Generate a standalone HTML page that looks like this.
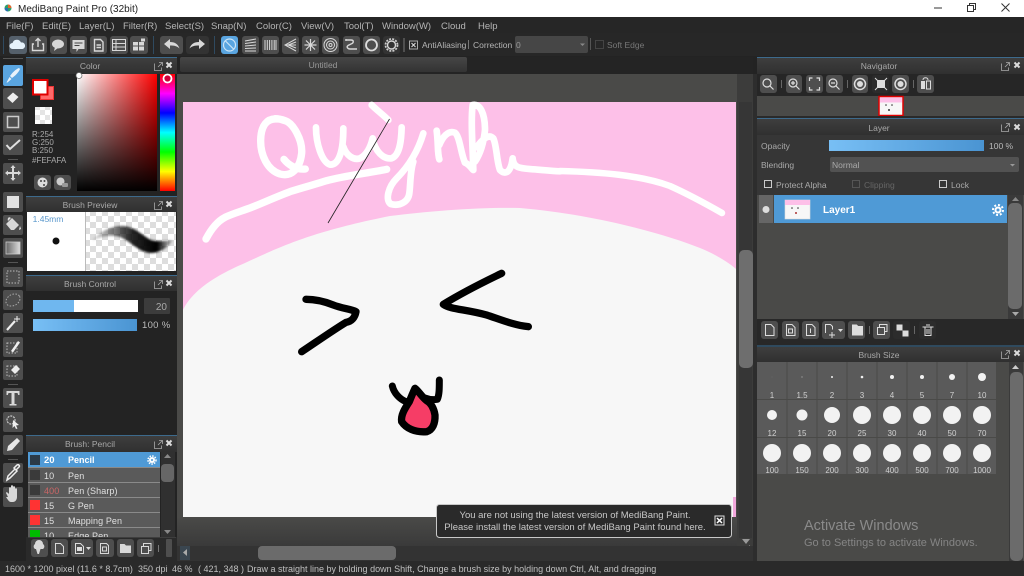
<!DOCTYPE html>
<html><head><meta charset="utf-8"><style>
html,body{margin:0;padding:0;background:#232323;width:1024px;height:576px;overflow:hidden}
svg{display:block;position:absolute;left:0;top:0}
text{font-family:"Liberation Sans",sans-serif;font-size:8.5px;fill:#b5b5b5;letter-spacing:0}
.m{text-anchor:middle}
.h{text-anchor:middle;fill:#a8a8a8}
.b{fill:#4e4e4e}
.i{fill:#d8d8d8}
.s{fill:none;stroke:#d8d8d8;stroke-width:1.4}
.d{text-anchor:middle;font-size:8px;fill:#d0d0d0;letter-spacing:0}
.l{font-size:9px;fill:#e0e0e0;letter-spacing:.1px}
.c{fill:none;stroke:#fff;stroke-width:5.5;stroke-linecap:round;stroke-linejoin:round}
.k{fill:none;stroke:#000;stroke-width:5;stroke-linecap:round;stroke-linejoin:round}
.sep{fill:#777}
.st{font-size:9px;fill:#c0c0c0}
.n{text-anchor:middle;font-size:9.5px;fill:#c8c8c8}
.mn{font-size:9.5px}
</style></head><body>
<svg width="1024" height="576" viewBox="0 0 1024 576" xmlns="http://www.w3.org/2000/svg">
<defs>
<linearGradient id="hd" x1="0" y1="0" x2="0" y2="1"><stop offset="0" stop-color="#3e3e3e"/><stop offset="1" stop-color="#303030"/></linearGradient>
<linearGradient id="blue" x1="0" y1="0" x2="1" y2="0"><stop offset="0" stop-color="#78bff5"/><stop offset="1" stop-color="#4a94d2"/></linearGradient>
<linearGradient id="sv1" x1="0" y1="0" x2="1" y2="0"><stop offset="0" stop-color="#fff"/><stop offset="1" stop-color="#f00"/></linearGradient>
<linearGradient id="sv2" x1="0" y1="0" x2="0" y2="1"><stop offset="0" stop-color="#000" stop-opacity="0"/><stop offset="1" stop-color="#000"/></linearGradient>
<linearGradient id="hue" x1="0" y1="0" x2="0" y2="1"><stop offset="0" stop-color="#f00"/><stop offset=".167" stop-color="#f0f"/><stop offset=".333" stop-color="#00f"/><stop offset=".5" stop-color="#0ff"/><stop offset=".667" stop-color="#0f0"/><stop offset=".833" stop-color="#ff0"/><stop offset="1" stop-color="#f00"/></linearGradient>
<linearGradient id="gr" x1="0" y1="0" x2="1" y2="0"><stop offset="0" stop-color="#666"/><stop offset="1" stop-color="#ddd"/></linearGradient>
<linearGradient id="st" x1="0" y1="0" x2="1" y2="0"><stop offset="0" stop-color="#000" stop-opacity=".1"/><stop offset=".5" stop-color="#000" stop-opacity=".85"/><stop offset=".8" stop-color="#000"/><stop offset="1" stop-color="#000" stop-opacity=".15"/></linearGradient>
<linearGradient id="tab" x1="0" y1="0" x2="0" y2="1"><stop offset="0" stop-color="#464646"/><stop offset="1" stop-color="#333"/></linearGradient>
<linearGradient id="bot" x1="0" y1="0" x2="0" y2="1"><stop offset="0" stop-color="#4a4a48"/><stop offset="1" stop-color="#3a3a3a"/></linearGradient>
<pattern id="chk" width="10" height="10" patternUnits="userSpaceOnUse"><rect width="10" height="10" fill="#fff"/><rect width="5" height="5" fill="#e4e4e4"/><rect x="5" y="5" width="5" height="5" fill="#e4e4e4"/></pattern>
<pattern id="chk2" width="12" height="12" patternUnits="userSpaceOnUse"><rect width="12" height="12" fill="#fff"/><rect width="6" height="6" fill="#ddd"/><rect x="6" y="6" width="6" height="6" fill="#ddd"/></pattern>
<filter id="bl" x="-10%" y="-30%" width="120%" height="160%"><feGaussianBlur stdDeviation="1"/></filter>
</defs>

<!-- base -->
<rect width="1024" height="576" fill="#232323"/>

<!-- title bar -->
<rect width="1024" height="17" fill="#fff"/>
<circle cx="8" cy="8" r="3.5" fill="#2f9e6a"/><path d="M8 4.5a3.5 3.5 0 0 1 3.5 3.5H8z" fill="#e8632c"/><path d="M4.5 8a3.5 3.5 0 0 0 3.5 3.5V8z" fill="#2a6fb0"/>
<text x="18" y="12" style="font-size:10px;fill:#222">MediBang Paint Pro (32bit)</text>
<path d="M934 8h8" stroke="#333" fill="none"/>
<path d="M967.500 5.500h6v6h-6zM969.500 5.500v-2h6v6h-2" stroke="#333" fill="none"/>
<path d="M1001.500 3.500l8 8M1009.500 3.500l-8 8" stroke="#333" fill="none"/>

<!-- menu -->
<rect y="17" width="1024" height="16" fill="#262626"/>
<text x="6" y="29" class="mn">File(F)</text>
<text x="42" y="29" class="mn">Edit(E)</text>
<text x="79" y="29" class="mn">Layer(L)</text>
<text x="123" y="29" class="mn">Filter(R)</text>
<text x="165" y="29" class="mn">Select(S)</text>
<text x="211" y="29" class="mn">Snap(N)</text>
<text x="256" y="29" class="mn">Color(C)</text>
<text x="301" y="29" class="mn">View(V)</text>
<text x="344" y="29" class="mn">Tool(T)</text>
<text x="382" y="29" class="mn">Window(W)</text>
<text x="441" y="29" class="mn">Cloud</text>
<text x="478" y="29" class="mn">Help</text>

<!-- toolbar -->
<rect y="33" width="1024" height="23" fill="#272727"/>
<rect x="3" y="36" width="1" height="18" fill="#2f4a60"/>
<rect x="153" y="36" width="1" height="18" fill="#2f4a60"/>
<rect x="214" y="36" width="1" height="18" fill="#2f4a60"/>
<g class="b">
<rect x="9" y="36" width="18" height="18" rx="3" fill="#55606b"/>
<rect x="29" y="36" width="18" height="18" rx="3"/>
<rect x="50" y="36" width="17" height="18" rx="3"/>
<rect x="70" y="36" width="17" height="18" rx="3"/>
<rect x="90" y="36" width="17" height="18" rx="3"/>
<rect x="110" y="36" width="18" height="18" rx="3"/>
<rect x="130" y="36" width="18" height="18" rx="3"/>
<rect x="160" y="36" width="23" height="18" rx="3"/>
<rect x="186" y="36" width="23" height="18" rx="3" fill="#333"/>
<rect x="242" y="36" width="17" height="18" rx="3"/>
<rect x="262" y="36" width="17" height="18" rx="3"/>
<rect x="282" y="36" width="17" height="18" rx="3"/>
<rect x="302" y="36" width="17" height="18" rx="3"/>
<rect x="322" y="36" width="17" height="18" rx="3"/>
<rect x="343" y="36" width="17" height="18" rx="3"/>
<rect x="363" y="36" width="17" height="18" rx="3"/>
<rect x="383" y="36" width="17" height="18" rx="3" fill="#333"/>
</g>
<rect x="221" y="36" width="17" height="18" rx="3" fill="#5aa5e0"/>
<circle cx="229.500" cy="45" r="6" fill="none" stroke="#cde4f6" stroke-width="1.200"/><path d="M225.500 41l8 8" stroke="#cde4f6" stroke-width="1.200"/>
<path d="M12.500 49a3 3 0 0 1 0-6 4.500 4.500 0 0 1 8.500-.5 3.300 3.300 0 0 1 1.500 6.500z" fill="#e6f2fb"/>
<path class="s" d="M34 44h-1.500v6.500h11V44H42M38 47v-8M35.500 41l2.500-2.500 2.500 2.500"/>
<ellipse cx="58" cy="44" rx="6" ry="4.500" class="i"/><path class="i" d="M55 47l-1 4 4-3z"/>
<path class="i" d="M72.500 40h12v9h-6l-2 3v-3h-4z"/><path d="M74.500 43h8M74.500 45.500h5" stroke="#444"/>
<path class="s" d="M94.500 39.500h6l2.500 2.500v9h-8.500zM96.500 45h4.500M96.500 47.500h4.500"/>
<path class="s" style="stroke-width:1" d="M112.500 39.500h13v11h-13zM112.500 43.500h13M112.500 47h13M116 39.500v11"/>
<path class="i" d="M133 42h5v3.500h-5zM139 42h5v3.500h-5zM133 46.500h5v4h-5zM139 46.500h5v4h-5zM141 38.500h4v3h-4z"/>
<path class="i" d="M164 44l6-5v3c5 0 8 2 9.500 6.500-2.500-2.500-5-3-9.500-3v3.500z"/>
<path class="i" d="M205 44l-6-5v3c-5 0-8 2-9.500 6.500 2.500-2.500 5-3 9.500-3v3.500z"/>
<path class="s" style="stroke-width:1" d="M245 41l11-2M245 43.500l11-1.500M245 46l11-1M245 48.500l11-.5M245 51l11 0"/>
<path class="s" style="stroke-width:1" d="M265 40v10M267.300 40v10M269.600 40v10M271.900 40v10M274.200 40v10M276 40v10"/>
<path class="s" style="stroke-width:1" d="M296 39l-11 6 11 6M296 42l-8 3 8 3M296 45h-11"/>
<path class="s" style="stroke-width:1.200" d="M310.500 39v12M304.500 45h12M306 40.500l9 9M315 40.500l-9 9"/>
<circle cx="330.500" cy="45" r="6.500" class="s" style="stroke-width:1"/><circle cx="330.500" cy="45" r="4" class="s" style="stroke-width:1"/><circle cx="330.500" cy="45" r="1.500" class="s" style="stroke-width:1"/>
<path class="s" d="M346.500 40h4.500c3 0 3 3 0 4l-3 1.500c-2 1.500 0 3.500 2 3.500h5"/><circle cx="346" cy="40" r="1" class="i"/><circle cx="356" cy="49" r="1" class="i"/>
<circle cx="371.500" cy="45" r="5.500" fill="none" stroke="#ddd" stroke-width="1.800"/>
<circle cx="391.500" cy="45" r="4" class="s"/><circle cx="391.500" cy="45" r="6" fill="none" stroke="#ccc" stroke-width="1.800" stroke-dasharray="2 1.200"/>
<rect x="403.500" y="38" width="1" height="14" class="sep"/>
<rect x="409.500" y="41" width="8" height="8" fill="none" stroke="#aaa"/><path d="M411.500 43l4 4M415.500 43l-4 4" stroke="#ddd"/>
<text x="422" y="48">AntiAliasing</text>
<rect x="468" y="40" width="1" height="9" class="sep"/>
<text x="473" y="48">Correction</text>
<rect x="515" y="36" width="73" height="17" rx="2" fill="#464646"/>
<text x="516" y="48" style="fill:#999">0</text>
<path d="M580 43.500h5l-2.500 2.500z" fill="#888"/>
<rect x="590" y="38" width="1" height="12" fill="#555"/>
<rect x="595.500" y="40.500" width="8" height="8" fill="none" stroke="#444"/>
<text x="607" y="48" style="fill:#777">Soft Edge</text>

<!-- tab strip -->
<rect x="180" y="57" width="577" height="17" fill="#242424"/>
<rect x="180" y="57" width="287" height="15" rx="2" fill="url(#tab)"/>
<text x="323" y="68" class="m" style="fill:#999">Untitled</text>

<!-- canvas area -->
<rect x="177" y="74" width="576" height="472" fill="#4a4a48"/>
<rect x="177" y="517" width="560" height="29" fill="url(#bot)"/>
<rect x="737" y="74" width="16" height="472" fill="#3c3c3b"/>

<!-- canvas -->
<rect x="183" y="102" width="553" height="415" fill="#fdc0e8"/>
<path d="M183 310C190 296 205 280 245 263 280 247 310 232 390 216 430 211 480 207 520 208 590 214 660 232 700 248 715 254 728 262 736 269V517H183z" fill="#f7f7f7"/>
<rect x="733" y="497" width="3" height="20" fill="#f2a8dc"/>

<g transform="translate(180,90) scale(.33333)">
<g class="c">
<path style="stroke-width:22" d="M290 87C262 85 243 105 242 150 241 195 262 240 300 252 335 262 360 235 365 190 368 150 340 100 315 92 305 88 295 86 285 86"/>
<path style="stroke-width:22" d="M312 208C325 225 350 240 376 237"/>
<path style="stroke-width:20" d="M408 112C408 160 425 215 450 224 478 225 490 180 490 115"/>
<path style="stroke-width:20" d="M490 170C498 195 520 212 540 205 560 195 572 170 578 145 585 185 610 208 635 205 660 195 664 150 665 112"/>
<path style="stroke-width:20" d="M730 130C715 180 690 225 650 265 625 290 615 330 632 342 660 350 685 335 688 310 692 280 690 245 700 215"/>
<path style="stroke-width:20" d="M770 122C775 160 772 190 778 208M778 165C788 140 805 120 825 128 840 140 842 190 855 218"/>
<path style="stroke-width:20" d="M855 218C870 225 878 240 880 240 878 170 872 90 878 45 900 40 915 70 915 120 910 170 895 200 885 215M890 172C905 150 925 130 940 145 950 165 950 215 960 240 975 255 992 250 998 205 1000 235 1020 235 1060 238 1090 240 1110 243 1140 244"/>
<path style="stroke-width:20" d="M575 45C590 60 610 75 625 90"/>
<path style="stroke-width:22" d="M78 447C92 420 110 395 135 382 160 370 190 362 215 352 250 338 290 320 330 305 370 292 410 282 440 272 490 258 560 250 620 238"/>
</g>
</g>
<path class="c" style="stroke-width:6.500" d="M560 171C600 172 640 175 670 186 690 195 708 205 722 213"/>
<path d="M389.500 119L328 223" stroke="#222" stroke-width=".8" fill="none"/>

<g transform="translate(280,260) scale(.33333)">
<path class="k" style="stroke-width:22" d="M78 118C110 118 135 125 160 135 185 145 215 148 228 155 225 172 215 185 198 187 160 210 110 245 65 275"/>
<path class="k" style="stroke-width:22" d="M665 40C620 62 560 90 490 133 510 148 560 148 620 165 660 178 700 195 745 200"/>
<path d="M388 425C375 445 362 465 365 485 378 505 405 518 440 515 458 510 466 490 465 465 462 445 452 428 440 422 425 410 415 392 405 385 398 400 392 415 388 425z" fill="#f63d66" stroke="#000" stroke-width="22" stroke-linejoin="round"/>
<path class="k" style="stroke-width:21" d="M337 378C342 400 360 418 378 425M478 360C478 385 478 405 472 418 458 420 445 418 435 414"/>
</g>

<!-- canvas scrollbars -->
<rect x="739" y="102" width="13" height="436" fill="#363636"/>
<rect x="739" y="250" width="14" height="118" rx="5" fill="#6e6e6e"/>
<path d="M742 539h8l-4 5z" fill="#999"/>
<path d="M749 545v7l4-3.500z" fill="#999"/>
<rect x="177" y="546" width="576" height="15" fill="#333"/>
<rect x="180" y="546" width="10" height="14" fill="#3a4650"/>
<path d="M187 549v7l-4-3.500z" fill="#aaa"/>
<rect x="258" y="546" width="138" height="14" rx="4" fill="#6b6b6b"/>

<!-- status -->
<rect y="561" width="1024" height="15" fill="#2a2a2a"/>
<text x="5" y="572" class="st">1600 * 1200 pixel</text>
<text x="77" y="572" class="st">(11.6 * 8.7cm)</text>
<text x="138" y="572" class="st">350 dpi</text>
<text x="172" y="572" class="st">46 %</text>
<text x="198" y="572" class="st">( 421, 348 )</text>
<text x="247" y="572" class="st">Draw a straight line by holding down Shift, Change a brush size by holding down Ctrl, Alt, and dragging</text>

<!-- notification -->
<rect x="436.500" y="504.500" width="295" height="33" rx="3" fill="#2a2a2a" stroke="#c8c8c8"/>
<text x="575" y="518" class="n">You are not using the latest version of MediBang Paint.</text>
<text x="575" y="530" class="n">Please install the latest version of MediBang Paint found here.</text>
<rect x="715" y="516" width="9" height="9" fill="none" stroke="#e0e0e0"/><path d="M717 518l5 5M722 518l-5 5" stroke="#fff" stroke-width="1.500"/>

<!-- left tools -->
<rect x="0" y="56" width="26" height="505" fill="#232323"/>
<rect x="3" y="58" width="20" height="1" fill="#555"/>
<g fill="#4e4e4e">
<rect x="3" y="88" width="20" height="21" rx="2"/>
<rect x="3" y="112" width="20" height="20" rx="2"/>
<rect x="3" y="135" width="20" height="20" rx="2"/>
<rect x="3" y="163" width="20" height="21" rx="2"/>
<rect x="3" y="192" width="20" height="20" rx="2"/>
<rect x="3" y="215" width="20" height="20" rx="2"/>
<rect x="3" y="238" width="20" height="20" rx="2"/>
<rect x="3" y="267" width="20" height="20" rx="2"/>
<rect x="3" y="290" width="20" height="20" rx="2"/>
<rect x="3" y="313" width="20" height="20" rx="2"/>
<rect x="3" y="337" width="20" height="20" rx="2"/>
<rect x="3" y="360" width="20" height="20" rx="2"/>
<rect x="3" y="388" width="20" height="20" rx="2"/>
<rect x="3" y="412" width="20" height="20" rx="2"/>
<rect x="3" y="435" width="20" height="20" rx="2"/>
<rect x="3" y="463" width="20" height="20" rx="2"/>
<rect x="3" y="487" width="20" height="20" rx="2"/>
</g>
<rect x="3" y="65" width="20" height="21" rx="2" fill="#5aa5e0"/>
<path d="M19 68c-3 1-7 5-9 8l2 2c3-2 7-6 8-9zM9.500 77l2 2-4 3.500h-1z" fill="#e8f2fa"/>
<path d="M7 98l6-5.500 5.500 4.500-6 6z" fill="#eee"/>
<rect x="7.500" y="116.500" width="11" height="11" fill="none" stroke="#ccc" stroke-width="1.500"/>
<path d="M6.500 145l3.500 4 10-9" fill="none" stroke="#e0e0e0" stroke-width="2"/>
<path class="i" d="M13 165l2.500 3h-1.500v4h4v-1.500l3 2.500-3 2.500V174h-4v4h1.500L13 181l-2.500-3H12v-4H8v1.500L5 173l3-2.500V172h4v-4h-1.500z"/>
<rect x="7" y="196" width="12" height="12" fill="#e2e2e2"/>
<path class="i" d="M6 224l6-6 7 7-5 5h-3zM11 218c-2-2-4 0-3 3"/><path d="M20 226l1 3-2 1z" fill="#eee"/>
<rect x="6" y="242" width="14" height="12" fill="url(#gr)" stroke="#ccc" stroke-width=".8"/>
<rect x="7" y="271" width="12" height="12" fill="none" stroke="#bbb" stroke-dasharray="1.500 1.500"/>
<ellipse cx="13" cy="300" rx="7.500" ry="5.500" fill="none" stroke="#aaa" stroke-dasharray="1.500 1.500" transform="rotate(-30 13 300)"/>
<path d="M7 330l8-9" stroke="#eee" stroke-width="2.200"/><path d="M17 316v6M14 319h6" stroke="#eee"/>
<rect x="7" y="343" width="10" height="10" fill="none" stroke="#bbb" stroke-dasharray="1.500 1.500"/><path d="M11 351l7-10 2 1.500-7 10z" fill="#eee"/>
<rect x="7" y="366" width="10" height="10" fill="none" stroke="#bbb" stroke-dasharray="1.500 1.500"/><path d="M11 370l5-5 4 4-5 5z" fill="#eee"/>
<path class="i" d="M6.500 391h13v4h-1.300l-.7-2h-3v11h2v1.500h-7V404h2v-11h-3l-.7 2H6.500z"/>
<circle cx="11" cy="420" r="4" fill="none" stroke="#ccc" stroke-width="1.200" stroke-dasharray="2 1"/><path d="M13 420l6 5-3 .5 1.500 3-1.500.5-1.500-3-2 2z" fill="#eee"/>
<path d="M7 451l1-5 9-8 3 3-8 9z" fill="#e6e6e6"/>
<path d="M7 480l1-4 7-7 2 2-7 7zM14 468l3-3c2-1 3 1 2 2l-3 3z" fill="none" stroke="#eee" stroke-width="1.500"/>
<path class="i" d="M8 497l-2-4c0-1 1-1 2 0l1 1v-6c0-1 2-1 2 0v4-6c0-1 2-1 2 0v6-5c0-1 2-1 2 0v6-4c0-1 2-1 2 0v8c0 3-2 5-4 5h-2c-2 0-3-2-5-5z"/>
<rect x="8" y="159" width="10" height="1" fill="#555"/><rect x="8" y="262" width="10" height="1" fill="#555"/><rect x="8" y="384" width="10" height="1" fill="#555"/><rect x="8" y="459" width="10" height="1" fill="#555"/>

<!-- COLOR panel -->
<rect x="26" y="57" width="151" height="1" fill="#3d6a8c"/>
<rect x="26" y="58" width="151" height="16" fill="url(#hd)"/>
<text x="90" y="69" class="h">Color</text>
<path d="M154.500 63.500v7h7v-3M158 67l4-4M159 62.500h3.500V66" fill="none" stroke="#aaa" stroke-width=".8"/>
<path d="M166.500 62.500l5 5M171.500 62.500l-5 5" stroke="#ddd" stroke-width="2"/>
<rect x="26" y="74" width="151" height="121" fill="#232323"/>
<rect x="40.500" y="86.500" width="13" height="13" fill="#ff6a6a" stroke="#e33"/>
<rect x="33" y="80" width="14.500" height="14.500" fill="#fff" stroke="#e00000" stroke-width="2"/>
<rect x="35" y="107" width="17" height="17" fill="url(#chk)"/>
<text x="32" y="137" style="font-size:8px;fill:#aaa">R:254</text>
<text x="32" y="145" style="font-size:8px;fill:#aaa">G:250</text>
<text x="32" y="153" style="font-size:8px;fill:#aaa">B:250</text>
<text x="32" y="163" style="font-size:8px;fill:#aaa">#FEFAFA</text>
<rect x="34" y="175" width="17" height="15" rx="3" fill="#4e4e4e"/><rect x="54" y="175" width="17" height="15" rx="3" fill="#4e4e4e"/>
<circle cx="42.500" cy="182.500" r="5" fill="#ddd"/><circle cx="41" cy="181" r="1" fill="#444"/><circle cx="44.500" cy="181" r="1" fill="#444"/><circle cx="44" cy="185" r="1" fill="#444"/>
<circle cx="60.500" cy="181.500" r="4" fill="#ccc"/><rect x="62" y="183" width="6" height="4" rx="1" fill="#999"/>
<rect x="77" y="74" width="80" height="117" fill="url(#sv1)"/>
<rect x="77" y="74" width="80" height="117" fill="url(#sv2)"/>
<circle cx="79" cy="75.500" r="3" fill="#fff" stroke="#666" stroke-width=".7"/>
<rect x="160" y="74" width="15" height="117" fill="url(#hue)"/>
<circle cx="167.500" cy="78.500" r="4" fill="#d0003a" stroke="#fff" stroke-width="1.800"/>

<!-- BRUSH PREVIEW -->
<rect x="26" y="196" width="151" height="1" fill="#3d6a8c"/>
<rect x="26" y="197" width="151" height="15" fill="url(#hd)"/>
<text x="90" y="208" class="h">Brush Preview</text>
<path d="M154.500 202.500v7h7v-3M158 206l4-4M159 201.500h3.500V205" fill="none" stroke="#aaa" stroke-width=".8"/>
<path d="M166.500 201.500l5 5M171.500 201.500l-5 5" stroke="#ddd" stroke-width="2"/>
<rect x="27" y="212" width="58" height="59" fill="#fff"/>
<rect x="85" y="212" width="1" height="59" fill="#bbb"/>
<rect x="86" y="212" width="90" height="59" fill="url(#chk2)"/>
<text x="48" y="222" style="text-anchor:middle;fill:#5a98cc;font-size:8.500px">1.45mm</text>
<circle cx="56" cy="241" r="3.500" fill="#111"/>
<path d="M92 241C100 231 112 226 122 226 134 226 143 236 151 240 158 242 164 241 173 240 167 248 160 253 151 253 140 253 130 241 120 237 110 234 100 237 92 241z" fill="url(#st)" filter="url(#bl)"/>

<!-- BRUSH CONTROL -->
<rect x="26" y="275" width="151" height="1" fill="#3d6a8c"/>
<rect x="26" y="276" width="151" height="15" fill="url(#hd)"/>
<text x="90" y="287" class="h">Brush Control</text>
<path d="M154.500 281.500v7h7v-3M158 285l4-4M159 280.500h3.500V284" fill="none" stroke="#aaa" stroke-width=".8"/>
<path d="M166.500 280.500l5 5M171.500 280.500l-5 5" stroke="#ddd" stroke-width="2"/>
<rect x="33" y="300" width="105" height="12" fill="#fff"/>
<rect x="33" y="300" width="41" height="12" fill="#6fb7ef"/>
<rect x="144" y="298" width="26" height="16" rx="1" fill="#3c3c3c"/>
<text x="167" y="310" style="text-anchor:end;fill:#aaa;font-size:10px">20</text>
<rect x="33" y="319" width="104" height="12" fill="url(#blue)"/>
<text x="142" y="328" style="fill:#bbb;font-size:9.500px;letter-spacing:.3px">100 %</text>

<!-- BRUSH LIST -->
<rect x="26" y="435" width="151" height="1" fill="#3d6a8c"/>
<rect x="26" y="436" width="151" height="16" fill="url(#hd)"/>
<text x="90" y="447" class="h">Brush: Pencil</text>
<path d="M154.500 441.500v7h7v-3M158 445l4-4M159 440.500h3.500V444" fill="none" stroke="#aaa" stroke-width=".8"/>
<path d="M166.500 440.500l5 5M171.500 440.500l-5 5" stroke="#ddd" stroke-width="2"/>
<rect x="28" y="452" width="132" height="85" fill="#5a5a5a"/>
<rect x="28" y="452" width="132" height="16" fill="#4f9ad6"/>
<rect x="28" y="482" width="132" height="1" fill="#8a8a8a"/><rect x="28" y="497" width="132" height="1" fill="#8a8a8a"/><rect x="28" y="512" width="132" height="1" fill="#8a8a8a"/><rect x="28" y="527" width="132" height="1" fill="#8a8a8a"/><rect x="28" y="467" width="132" height="1" fill="#8a8a8a"/>
<rect x="30" y="455" width="10" height="10" fill="#2b3a48"/>
<rect x="30" y="470" width="10" height="10" fill="#3a3a3a"/>
<rect x="30" y="485" width="10" height="10" fill="#3a3a3a"/>
<rect x="30" y="500" width="10" height="10" fill="#f33"/>
<rect x="30" y="515" width="10" height="10" fill="#f33"/>
<rect x="30" y="530" width="10" height="7" fill="#0b0"/>
<text x="44" y="463" style="font-size:9.500px;font-weight:bold;fill:#fff">20</text>
<text x="68" y="463" style="font-size:9px;font-weight:bold;fill:#fff">Pencil</text>
<text x="44" y="479" class="l">10</text><text x="68" y="479" class="l">Pen</text>
<text x="44" y="494" class="l" style="fill:#c66">400</text><text x="68" y="494" class="l">Pen (Sharp)</text>
<text x="44" y="509" class="l">15</text><text x="68" y="509" class="l">G Pen</text>
<text x="44" y="524" class="l">15</text><text x="68" y="524" class="l">Mapping Pen</text>
<clipPath id="cl"><rect x="28" y="528" width="132" height="9"/></clipPath>
<g clip-path="url(#cl)"><text x="44" y="539" class="l">10</text><text x="68" y="539" class="l">Edge Pen</text></g>
<circle cx="152" cy="460" r="3" fill="#fff"/><circle cx="152" cy="460" r="4" fill="none" stroke="#fff" stroke-width="1.500" stroke-dasharray="1.500 1.200"/><circle cx="152" cy="460" r="1" fill="#4f9ad6"/>
<rect x="161" y="452" width="14" height="85" fill="#303030"/>
<path d="M164 458h7l-3.500-4z" fill="#888"/><path d="M164 530h7l-3.500 4z" fill="#888"/>
<rect x="161" y="464" width="13" height="18" rx="4" fill="#666"/>
<rect x="26" y="537" width="151" height="24" fill="#2a2a2a"/>
<rect x="28" y="537" width="148" height="1" fill="#3e3e3e"/>
<g fill="#4e4e4e"><rect x="31" y="539" width="17" height="18" rx="3"/><rect x="51" y="539" width="17" height="18" rx="3"/><rect x="71" y="539" width="22" height="18" rx="3"/><rect x="96" y="539" width="18" height="18" rx="3"/><rect x="117" y="539" width="17" height="18" rx="3"/><rect x="137" y="539" width="17" height="18" rx="3"/><rect x="166" y="539" width="6" height="18" rx="1"/></g>
<rect x="158" y="545" width="1" height="7" fill="#777"/>
<path class="i" d="M35 549a3 3 0 0 1 0-5 4 4 0 0 1 8 0 3 3 0 0 1 0 5h-2.500l-1.500 5-1.500 0-1.500-5z"/>
<path class="s" style="stroke-width:1" d="M55.500 543.500h5l3 3v7h-8z"/>
<path d="M75.500 543.500h5l3 3v7h-8z" fill="none" stroke="#ddd"/><rect x="77" y="547" width="5" height="4" fill="#ddd"/><path d="M86 547h5l-2.500 3z" fill="#ddd"/>
<path class="s" style="stroke-width:1" d="M100.500 543.500h6l2 2v8h-8zM102.500 547h4v4h-4z"/>
<path class="i" d="M120 544h4.500l1.500 1.500h5v7.500h-11z"/>
<path class="s" style="stroke-width:1" d="M141.500 546.500h7v7h-7zM143.500 546v-2.500h7.500v7h-2"/>

<!-- right side base -->
<rect x="753" y="56" width="271" height="505" fill="#232323"/>
<rect x="753" y="74" width="4" height="487" fill="#2d2d2d"/>

<!-- NAVIGATOR -->
<rect x="757" y="57" width="267" height="1" fill="#3d6a8c"/>
<rect x="757" y="58" width="267" height="16" fill="url(#hd)"/>
<text x="879" y="69" class="h">Navigator</text>
<path d="M1001.500 63.500v7h7v-3M1005 67l4-4M1006 62.500h3.500V66" fill="none" stroke="#aaa" stroke-width=".8"/>
<path d="M1014.500 62.500l5 5M1019.500 62.500l-5 5" stroke="#ddd" stroke-width="2"/>
<rect x="757" y="74" width="267" height="22" fill="#262626"/>
<g fill="#4e4e4e"><rect x="760" y="75" width="17" height="18" rx="3"/><rect x="786" y="75" width="16" height="18" rx="3"/><rect x="806" y="75" width="17" height="18" rx="3"/><rect x="826" y="75" width="17" height="18" rx="3"/><rect x="852" y="75" width="16" height="18" rx="3"/><rect x="872" y="75" width="17" height="18" rx="3" fill="#2c2c2c"/><rect x="892" y="75" width="17" height="18" rx="3"/><rect x="917" y="75" width="17" height="18" rx="3"/></g>
<rect x="781" y="80" width="1" height="8" fill="#666"/><rect x="847" y="80" width="1" height="8" fill="#666"/><rect x="913" y="80" width="1" height="8" fill="#666"/>
<g fill="none" stroke="#ddd" stroke-width="1.200">
<circle cx="767" cy="83" r="4"/><path d="M770 86l3.500 3.500"/>
<circle cx="793" cy="83" r="4"/><path d="M796 86l3.500 3.500M791 83h4M793 81v4"/>
<path d="M809.500 81v-3h3M819.500 81v-3h-3M809.500 87v3h3M819.500 87v3h-3"/>
<circle cx="833" cy="83" r="4"/><path d="M836 86l3.500 3.500M831 83h4"/>
<circle cx="860" cy="84" r="5.500" stroke-width="1.500"/>
<circle cx="900.500" cy="84" r="5.500" stroke-width="1.500"/>
</g>
<circle cx="860" cy="84" r="3" fill="#ddd"/><circle cx="900.500" cy="84" r="3" fill="#ddd"/>
<rect x="877" y="80" width="8" height="8" fill="#ddd"/><path d="M875 78l3 3M887 78l-3 3M875 90l3-3M887 90l-3-3" stroke="#ddd"/>
<rect x="921" y="81" width="4" height="8" fill="#ddd"/><rect x="926.500" y="81" width="4" height="8" fill="none" stroke="#ddd"/><path d="M923 80c0-3 5-3 5 0" fill="none" stroke="#ddd"/>
<rect x="757" y="96" width="267" height="20" fill="#4a4a48"/>
<rect x="879" y="96.500" width="24" height="19" fill="#f7f7f7" stroke="#e00000" stroke-width="1.500"/>
<rect x="880" y="97.500" width="22" height="5" fill="#fdc0e8"/>
<circle cx="886" cy="105" r=".8" fill="#333"/><circle cx="892" cy="105" r=".8" fill="#333"/><circle cx="889" cy="110" r="1" fill="#333"/>
<rect x="757" y="116" width="267" height="3" fill="#2a2a2a"/>

<!-- LAYER -->
<rect x="757" y="118" width="267" height="1" fill="#3d6a8c"/>
<rect x="757" y="119" width="267" height="16" fill="url(#hd)"/>
<text x="879" y="131" class="h">Layer</text>
<path d="M1001.500 124.500v7h7v-3M1005 128l4-4M1006 123.500h3.500V127" fill="none" stroke="#aaa" stroke-width=".8"/>
<path d="M1014.500 124.500l5 5M1019.500 124.500l-5 5" stroke="#ddd" stroke-width="2"/>
<rect x="757" y="135" width="267" height="60" fill="#363636"/>
<text x="761" y="149" style="fill:#aaa">Opacity</text>
<rect x="829" y="140" width="155" height="11" fill="url(#blue)"/>
<text x="989" y="149" style="fill:#bbb">100 %</text>
<text x="761" y="168" style="fill:#aaa">Blending</text>
<rect x="830" y="157" width="189" height="15" rx="2" fill="#525252"/>
<text x="832" y="168" style="fill:#aaa">Normal</text>
<path d="M1010 164h5l-2.500 2.500z" fill="#999"/>
<rect x="764.500" y="180.500" width="7" height="7" fill="none" stroke="#ccc"/>
<text x="776" y="188" style="fill:#aaa">Protect Alpha</text>
<rect x="852.500" y="180.500" width="7" height="7" fill="none" stroke="#555"/>
<text x="864" y="188" style="fill:#666">Clipping</text>
<rect x="939.500" y="180.500" width="7" height="7" fill="none" stroke="#ccc"/>
<text x="951" y="188" style="fill:#aaa">Lock</text>

<rect x="757" y="195" width="267" height="124" fill="#4a4a48"/>
<rect x="759" y="195" width="14" height="28" fill="#666"/>
<circle cx="766" cy="209.500" r="3.500" fill="#ddd"/>
<rect x="774" y="195" width="233" height="28" fill="#4f9ad6"/>
<rect x="785" y="200" width="25" height="19" fill="#f7f7f7" stroke="#ddd" stroke-width=".6"/>
<rect x="785" y="200" width="25" height="5" fill="#fdc0e8"/>
<circle cx="792" cy="208" r=".8" fill="#333"/><circle cx="798" cy="208" r=".8" fill="#333"/><circle cx="796" cy="213" r="1" fill="#a33"/>
<text x="823" y="213" style="font-size:10px;font-weight:bold;fill:#fff">Layer1</text>
<circle cx="998" cy="210" r="3.500" fill="#fff"/><circle cx="998" cy="210" r="5" fill="none" stroke="#fff" stroke-width="2" stroke-dasharray="2 1.900"/><circle cx="998" cy="210" r="1.500" fill="#4f9ad6"/>
<rect x="1008" y="195" width="15" height="124" fill="#3a3a3a"/>
<path d="M1012 201h7l-3.500-4z" fill="#888"/><path d="M1012 312h7l-3.500 4z" fill="#aaa"/>
<rect x="1008" y="203" width="14" height="106" rx="5" fill="#6b6b6b"/>
<rect x="757" y="319" width="267" height="26" fill="#282828"/>
<g fill="#4e4e4e"><rect x="761" y="321" width="17" height="18" rx="3"/><rect x="782" y="321" width="17" height="18" rx="3"/><rect x="802" y="321" width="17" height="18" rx="3"/><rect x="822" y="321" width="23" height="18" rx="3"/><rect x="848" y="321" width="17" height="18" rx="3"/><rect x="873" y="321" width="17" height="18" rx="3"/><rect x="893" y="321" width="17" height="18" rx="3" fill="#2c2c2c"/><rect x="919" y="321" width="17" height="18" rx="3" fill="#2c2c2c"/></g>
<rect x="869" y="326" width="1" height="8" fill="#666"/><rect x="914" y="326" width="1" height="8" fill="#666"/>
<g fill="none" stroke="#ddd">
<path d="M765.500 324.500h5.500l3 3v8h-8.500z"/>
<path d="M786.500 324.500h5.500l3 3v8h-8.500z"/><rect x="788.500" y="329" width="4" height="4"/>
<path d="M806.500 324.500h5.500l3 3v8h-8.500z"/><path d="M810.500 328.500v4.500"/>
<path d="M825.500 333v-8.500h5l2 2v3M832 332v6M829 335h6"/>
<path d="M852.500 325h4l1.500 1.500h4.500V335h-10z" fill="#ddd"/>
<path d="M877.500 327.500h7v7h-7zM879.500 327v-2.500h7.500v7h-2"/>
<path d="M897 325h5v5h-5zM903 331h5v5h-5z" fill="#ddd"/>
<path d="M922.500 327h11M925 327v8.500h6V327M926 325h4M927 329v5M929 329v5"/>
</g>
<path d="M838 329h5l-2.500 3z" fill="#ddd"/>

<!-- BRUSH SIZE -->
<rect x="757" y="345" width="267" height="2" fill="#2f4a5e"/>
<rect x="757" y="347" width="267" height="15" fill="url(#hd)"/>
<text x="879" y="358" class="h">Brush Size</text>
<path d="M1001.500 351.500v7h7v-3M1005 355l4-4M1006 350.500h3.500V354" fill="none" stroke="#aaa" stroke-width=".8"/>
<path d="M1014.500 350.500l5 5M1019.500 350.500l-5 5" stroke="#ddd" stroke-width="2"/>
<rect x="757" y="362" width="267" height="199" fill="#4a4a48"/>
<rect x="757" y="362" width="239" height="112" fill="#5a5a5a"/>
<g fill="#4a4a48">
<rect x="786.500" y="362" width="1" height="112"/><rect x="816.500" y="362" width="1" height="112"/><rect x="846.500" y="362" width="1" height="112"/><rect x="876.500" y="362" width="1" height="112"/><rect x="906.500" y="362" width="1" height="112"/><rect x="936.500" y="362" width="1" height="112"/><rect x="966.500" y="362" width="1" height="112"/>
<rect x="757" y="399" width="239" height="1"/><rect x="757" y="437" width="239" height="1"/>
</g>
<g fill="#f2f2f2">
<circle cx="772" cy="377" r=".4" fill="#777"/><circle cx="802" cy="377" r=".7" fill="#999"/><circle cx="832" cy="377" r="1"/><circle cx="862" cy="377" r="1.300"/><circle cx="892" cy="377" r="2"/><circle cx="922" cy="377" r="2"/><circle cx="952" cy="377" r="3"/><circle cx="982" cy="377" r="4"/>
<circle cx="772" cy="415" r="5"/><circle cx="802" cy="415" r="5.500"/><circle cx="832" cy="415" r="8"/><circle cx="862" cy="415" r="9"/><circle cx="892" cy="415" r="9"/><circle cx="922" cy="415" r="9"/><circle cx="952" cy="415" r="9"/><circle cx="982" cy="415" r="9"/>
<circle cx="772" cy="453" r="9"/><circle cx="802" cy="453" r="9"/><circle cx="832" cy="453" r="9"/><circle cx="862" cy="453" r="9"/><circle cx="892" cy="453" r="9"/><circle cx="922" cy="453" r="9"/><circle cx="952" cy="453" r="9"/><circle cx="982" cy="453" r="9"/>
</g>
<text x="772" y="398" class="d">1</text><text x="802" y="398" class="d">1.5</text><text x="832" y="398" class="d">2</text><text x="862" y="398" class="d">3</text><text x="892" y="398" class="d">4</text><text x="922" y="398" class="d">5</text><text x="952" y="398" class="d">7</text><text x="982" y="398" class="d">10</text>
<text x="772" y="436" class="d">12</text><text x="802" y="436" class="d">15</text><text x="832" y="436" class="d">20</text><text x="862" y="436" class="d">25</text><text x="892" y="436" class="d">30</text><text x="922" y="436" class="d">40</text><text x="952" y="436" class="d">50</text><text x="982" y="436" class="d">70</text>
<text x="772" y="473" class="d">100</text><text x="802" y="473" class="d">150</text><text x="832" y="473" class="d">200</text><text x="862" y="473" class="d">300</text><text x="892" y="473" class="d">400</text><text x="922" y="473" class="d">500</text><text x="952" y="473" class="d">700</text><text x="982" y="473" class="d">1000</text>
<rect x="1009" y="362" width="14" height="199" fill="#3a3a3a"/>
<path d="M1012 369h7l-3.500-4z" fill="#ccc"/>
<rect x="1010" y="372" width="13" height="189" rx="5" fill="#6b6b6b"/>

<text x="804" y="530" style="font-size:14.500px;fill:#8a8a8a">Activate Windows</text>
<text x="804" y="546" style="font-size:11px;fill:#858585">Go to Settings to activate Windows.</text>
</svg>
</body></html>
